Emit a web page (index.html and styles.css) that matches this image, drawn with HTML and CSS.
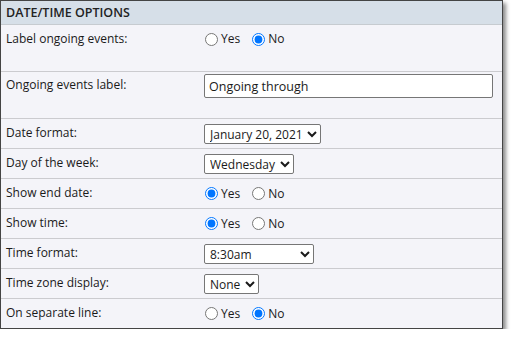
FILE: index.html
```html
<!DOCTYPE html>
<html lang="en">
<head>
    <meta charset="UTF-8">
    <title>Date/Time Options</title>
    <link rel="stylesheet" href="styles.css">
</head>
<body>
    <div class="panel">
        <div class="panel-header">DATE/TIME OPTIONS</div>

        <div class="row tall">
            <span class="label">Label ongoing events:</span>
            <div class="radios">
                <label><input type="radio" name="ongoing"> Yes</label>
                <label><input type="radio" name="ongoing" checked> No</label>
            </div>
        </div>

        <div class="row tall input-row">
            <span class="label">Ongoing events label:</span>
            <input class="text" type="text" value="Ongoing through">
        </div>

        <div class="row">
            <span class="label">Date format:</span>
            <select class="sel sel-date">
                <option>January 20, 2021</option>
                <option>01/20/2021</option>
            </select>
        </div>

        <div class="row">
            <span class="label">Day of the week:</span>
            <select class="sel sel-day">
                <option>Wednesday</option>
                <option>Wed</option>
            </select>
        </div>

        <div class="row">
            <span class="label">Show end date:</span>
            <div class="radios">
                <label><input type="radio" name="enddate" checked> Yes</label>
                <label><input type="radio" name="enddate"> No</label>
            </div>
        </div>

        <div class="row">
            <span class="label">Show time:</span>
            <div class="radios">
                <label><input type="radio" name="showtime" checked> Yes</label>
                <label><input type="radio" name="showtime"> No</label>
            </div>
        </div>

        <div class="row">
            <span class="label">Time format:</span>
            <select class="sel sel-time">
                <option>8:30am</option>
                <option>08:30</option>
            </select>
        </div>

        <div class="row">
            <span class="label">Time zone display:</span>
            <select class="sel sel-zone">
                <option>None</option>
                <option>EST</option>
            </select>
        </div>

        <div class="row last">
            <span class="label">On separate line:</span>
            <div class="radios">
                <label><input type="radio" name="sepline"> Yes</label>
                <label><input type="radio" name="sepline" checked> No</label>
            </div>
        </div>
    </div>
</body>
</html>
```

FILE: styles.css
```css
body {
    margin: 0;
    background: white;
    font-family: "Open Sans", "Noto Sans", sans-serif;
    font-size: 12px;
    color: #1a1a1a;
}
.panel {
    width: 501px;
    border: 1px solid #444;
    background: #f4f4f9;
    box-shadow: 3px 3px 4px rgba(0, 0, 0, 0.45);
}
.panel-header {
    height: 23px;
    line-height: 23px;
    padding-left: 5px;
    background: #d6dfe8;
    border-bottom: 1px solid #c6cbd0;
    font-size: 12.5px;
    font-weight: 600;
    color: #222;
}
.row {
    display: grid;
    grid-template-columns: 198px 1fr;
    align-items: center;
    height: 29px;
    padding: 0 10px 0 5px;
    border-bottom: 1px solid #cbcbcf;
}
.row.last {
    border-bottom: none;
}
.row.tall {
    height: 46px;
    align-items: start;
}
.row.tall .label,
.row.tall .radios {
    margin-top: 5px;
}
.row.input-row .label {
    margin-top: 4px;
}
.label {
    line-height: 18px;
    margin-top: -2px;
}
.radios {
    display: flex;
    align-items: center;
    gap: 11px;
    line-height: 18px;
}
.radios label {
    display: flex;
    align-items: center;
}
.radios input {
    margin: 0 3px 0 1px;
    width: 13px;
    height: 13px;
}
.text {
    box-sizing: border-box;
    width: 289px;
    height: 24px;
    margin: 2px 0 0;
    padding: 0 4px;
    border: 1px solid #767676;
    border-radius: 2px;
    font-family: inherit;
    font-size: 12.5px;
    color: #1a1a1a;
}
.sel {
    box-sizing: border-box;
    height: 20px;
    padding: 0 0 0 1px;
    font-family: inherit;
    font-size: 12px;
    color: #1a1a1a;
    background: white;
    border: 1px solid #767676;
    border-radius: 2px;
}
.sel-date { width: 117px; }
.sel-day  { width: 90px; }
.sel-time { width: 110px; }
.sel-zone { width: 55px; }
```
